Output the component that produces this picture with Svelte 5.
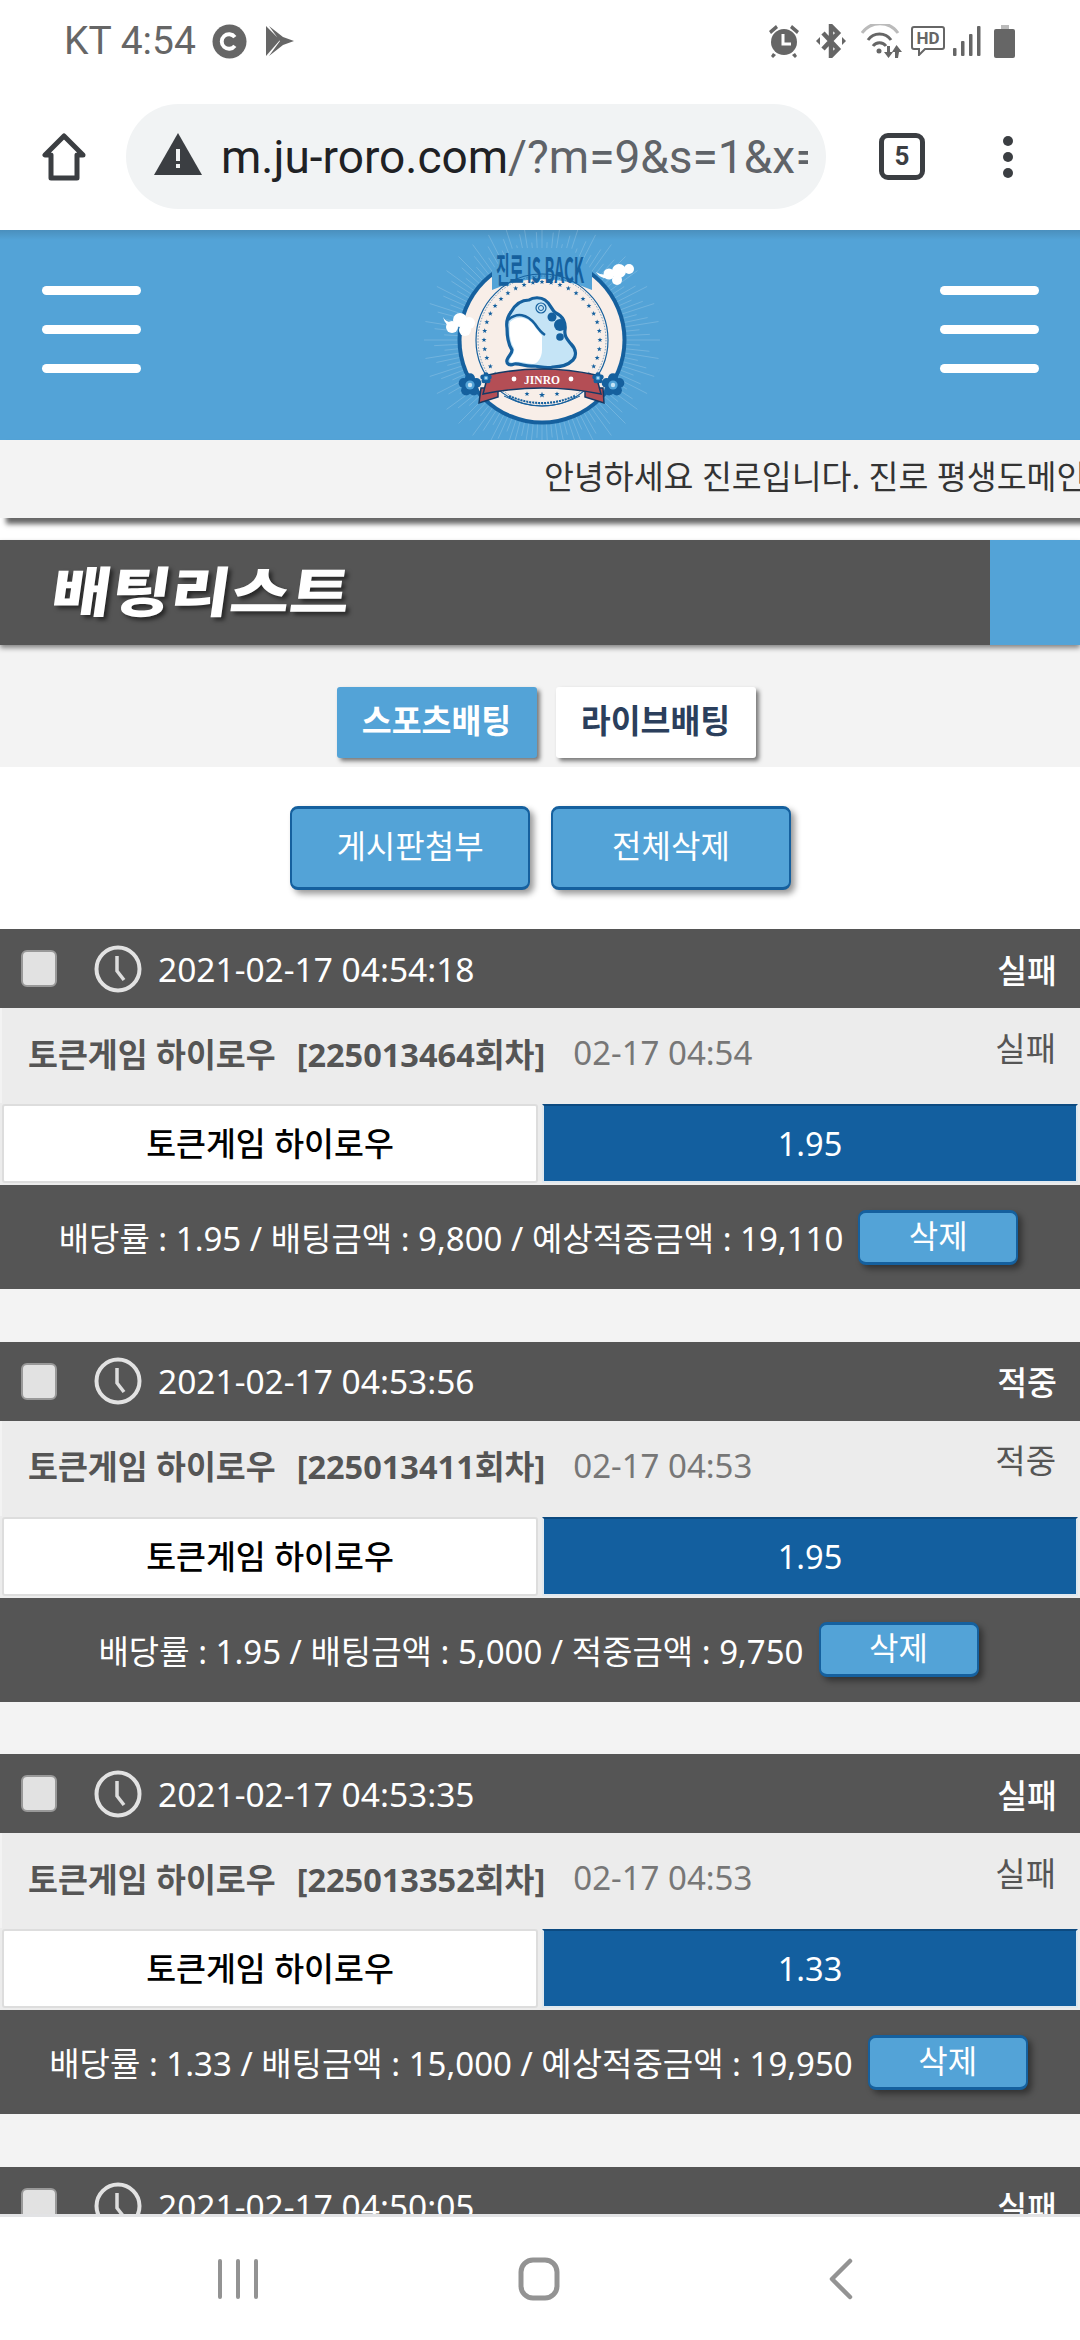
<script>
  const items = [
    { time: '2021-02-17 04:54:18', status: '실패', round: '225013464', short: '02-17 04:54', odd: '1.95', info: '배당률 : 1.95 / 배팅금액 : 9,800 / 예상적중금액 : 19,110' },
    { time: '2021-02-17 04:53:56', status: '적중', round: '225013411', short: '02-17 04:53', odd: '1.95', info: '배당률 : 1.95 / 배팅금액 : 5,000 / 적중금액 : 9,750' },
    { time: '2021-02-17 04:53:35', status: '실패', round: '225013352', short: '02-17 04:53', odd: '1.33', info: '배당률 : 1.33 / 배팅금액 : 15,000 / 예상적중금액 : 19,950' },
    { time: '2021-02-17 04:50:05', status: '실패', round: '225013300', short: '02-17 04:50', odd: '1.95', info: '배당률 : 1.95 / 배팅금액 : 9,800 / 예상적중금액 : 19,110' }
  ];
  const cx = 181, cy = 120;
  const rays = Array.from({ length: 120 }, (_, i) => {
    const a = (i * 3 * Math.PI) / 180;
    const long = i % 3 === 0 ? 118 : i % 3 === 1 ? 98 : 108;
    return {
      x1: cx + Math.cos(a) * 84, y1: cy + Math.sin(a) * 84,
      x2: cx + Math.cos(a) * long, y2: cy + Math.sin(a) * long
    };
  });
  function star(x, y, r) {
    const pts = [];
    for (let i = 0; i < 10; i++) {
      const a = -Math.PI / 2 + (i * Math.PI) / 5;
      const q = i % 2 ? r * 0.42 : r;
      pts.push((x + Math.cos(a) * q).toFixed(2) + ',' + (y + Math.sin(a) * q).toFixed(2));
    }
    return pts.join(' ');
  }
  const stars = Array.from({ length: 31 }, (_, i) => {
    const a = ((-135 + i * 9) * Math.PI) / 180 - Math.PI / 2;
    return star(cx + Math.cos(a) * 58, cy + Math.sin(a) * 58, 2.6);
  });
  const petals = [0, 72, 144, 216, 288];
</script>

<div class="phone">
  <div class="status">
    <div class="status-left">
      <span class="carrier">KT 4:54</span>
      <svg class="ic-c" viewBox="0 0 36 36"><circle cx="18" cy="18" r="17.500" fill="#666"/><path d="M23.500 13.500a7.500 7.500 0 1 0 0 9" fill="none" stroke="#fff" stroke-width="4"/></svg>
      <svg class="ic-play" viewBox="0 0 28 30"><path d="M0 0l14 14L0 30zM3 0l14 11 11 4-11 4-14 11 11-15z" fill="#666"/></svg>
    </div>
    <div class="status-right">
      <svg class="s-alarm" viewBox="0 0 32 34"><g fill="#666"><circle cx="16" cy="18" r="13"/><path d="M1 7l7-6 2 3-7 6zM31 7l-7-6-2 3 7 6zM5 29l3 2-3 3-2-2zM27 29l-3 2 3 3 2-2z"/></g><path d="M15 10v10h8" fill="none" stroke="#fff" stroke-width="3"/></svg>
      <svg class="s-bt" viewBox="0 0 30 34"><path d="M7 9l15 16-7 7V2l7 7L7 25" fill="none" stroke="#666" stroke-width="4.500"/><path d="M0 17l4-4v8zM30 17l-4-4v8z" fill="#666"/></svg>
      <svg class="s-wifi" viewBox="0 0 42 34"><path d="M1 9a22 22 0 0 1 36 0" fill="none" stroke="#bbb" stroke-width="3"/><path d="M7 16a14 14 0 0 1 23 0M12 22a8 8 0 0 1 13 0" fill="none" stroke="#666" stroke-width="3"/><circle cx="18" cy="27" r="2.500" fill="#666"/><path d="M26 22h3v6h3l-4.500 6-4.500-6h3zM37 34h-3v-6h-3l4.500-7 5.500 7h-3z" fill="#666"/></svg>
      <svg class="s-hd" viewBox="0 0 34 30"><path d="M3 1h28a2 2 0 0 1 2 2v18a2 2 0 0 1-2 2H14l-6 6v-6H3a2 2 0 0 1-2-2V3a2 2 0 0 1 2-2z" fill="none" stroke="#666" stroke-width="2"/><text x="17" y="18" class="hd">HD</text></svg>
      <svg class="s-sig" viewBox="0 0 28 32"><rect x="0" y="23" width="3.500" height="8" rx="1" fill="#666"/><rect x="8" y="16" width="3.500" height="15" rx="1" fill="#666"/><rect x="16" y="9" width="3.500" height="22" rx="1" fill="#666"/><rect x="24" y="1" width="3.500" height="30" rx="1" fill="#666"/></svg>
      <svg class="s-bat" viewBox="0 0 22 33"><rect x="7" y="0" width="8" height="5" fill="#bbb"/><rect x="0" y="4" width="21" height="29" rx="2" fill="#666"/></svg>
    </div>
  </div>

  <div class="browser">
    <svg class="home" viewBox="0 0 48 48"><path d="M24 3L5 22h6v23h26V22h6z" fill="none" stroke="#3b3e42" stroke-width="5" stroke-linejoin="round"/></svg>
    <div class="url">
      <svg class="warn" viewBox="0 0 48 42"><path d="M24 0l24 42H0z" fill="#3b3e42"/><rect x="22" y="16" width="4" height="12" fill="#f1f3f4"/><rect x="22" y="31" width="4" height="4" fill="#f1f3f4"/></svg>
      <span class="url-text"><b>m.ju-roro.com</b>/?m=9&amp;s=1&amp;x=</span>
    </div>
    <div class="tabs-count">5</div>
    <div class="dots"><i></i><i></i><i></i></div>
  </div>

  <div class="page">
    <header class="top">
      <div class="burger"><i></i><i></i><i></i></div>
      <svg class="logo" viewBox="0 10 360 210">
        <g stroke="#fff" stroke-width="0.5" opacity="0.35">
          {#each rays as r}<line x1={r.x1} y1={r.y1} x2={r.x2} y2={r.y2} />{/each}
        </g>
        <circle cx="181" cy="120" r="84.500" fill="#15609e"/>
        <circle cx="181" cy="120" r="80.500" fill="#f8eee8"/>
        <path d="M131 50 L131 70 Q181 48 231 70 L231 50 L210 28 L152 28z" fill="#53a3d7"/>
        <circle cx="181" cy="120" r="66" fill="none" stroke="#15609e" stroke-width="1.200"/>
        <circle cx="181" cy="120" r="64" fill="none" stroke="#15609e" stroke-width="0.600" stroke-dasharray="1.500 1.500"/>
        <text x="135" y="63" class="jin" textLength="88" lengthAdjust="spacingAndGlyphs">진로 IS BACK</text>
        {#each stars as s}<polygon points={s} fill="#15609e"/>{/each}

        <path d="M150 92C155 83 162 80 168 80C172 77 180 77 184 80C190 84 190 90 195 93C202 96 205 103 204 110C203 117 207 120 210 124C215 129 216 136 212 140C207 145 200 147 192 147C185 149 178 146 172 146C166 147 158 143 153 144C149 146 145 144 146 140C147 136 151 134 151 130C147 124 146 116 146 108C145 102 147 96 150 92z" fill="#c5e4f6" stroke="#15609e" stroke-width="3.200" stroke-linejoin="round"/>
        <path d="M149 102C156 95 166 97 172 104C176 110 180 114 181 116L181 130C181 138 176 144 172 144C166 144 160 141 154 142C150 143 148 142 149 139C151 135 154 133 153 128C149 122 148 112 149 102z" fill="#fff"/>
        <path d="M147 100C156 92 166 94 174 104C178 110 181 113 184 115" fill="none" stroke="#15609e" stroke-width="2.500"/>
        <circle cx="180" cy="88" r="5" fill="none" stroke="#15609e" stroke-width="1.200"/>
        <circle cx="180" cy="88" r="2.500" fill="none" stroke="#15609e" stroke-width="1"/>
        <circle cx="191" cy="97" r="4.500" fill="#15609e"/>
        <circle cx="199" cy="105" r="6" fill="#15609e"/>
        <circle cx="199" cy="117" r="3.800" fill="#15609e"/>

        <path d="M120 168L118 183L137 177L137 168z" fill="#b44e55" stroke="#143a66" stroke-width="1.500"/>
        <path d="M242 168L243 183L224 177L224 168z" fill="#b44e55" stroke="#143a66" stroke-width="1.500"/>
        <path d="M127 155Q181 143 235 155L240 174Q181 162 122 174z" fill="#b44e55" stroke="#143a66" stroke-width="1.500"/>
        <text x="181" y="164" class="jinro">JINRO</text>
        <circle cx="153" cy="159" r="2.400" fill="#fff"/>
        <circle cx="210" cy="159" r="2.400" fill="#fff"/>
        <polygon points={star(166, 174, 2.6)} fill="#15609e"/>
        <polygon points={star(181, 175, 3.2)} fill="#15609e"/>
        <polygon points={star(196, 174, 2.6)} fill="#15609e"/>
        <path d="M143 176Q181 196 219 176" fill="none" stroke="#15609e" stroke-width="1"/>
        <path d="M148 176Q181 190 214 176" fill="none" stroke="#15609e" stroke-width="2" stroke-dasharray="2 1"/>

        {#each [[109, 165, 11], [252, 165, 11], [125, 158, 5.5], [237, 158, 5.5]] as f}
          <g transform="translate({f[0]} {f[1]})">
            {#each petals as p}
              <circle cx={Math.cos((p - 90) * Math.PI / 180) * f[2] * 0.6} cy={Math.sin((p - 90) * Math.PI / 180) * f[2] * 0.6} r={f[2] * 0.46} fill="#15609e"/>
            {/each}
            <circle r={f[2] * 0.42} fill="#53a3d7"/>
            <circle r={f[2] * 0.2} fill="#c5e4f6"/>
          </g>
        {/each}

        <g fill="#fff">
          <circle cx="258" cy="51" r="7"/><circle cx="248" cy="54" r="5.500"/><circle cx="268" cy="49" r="5"/><circle cx="256" cy="60" r="5"/>
          <path d="M235 52Q243 57 250 52L250 58Q240 60 235 52z"/>
          <circle cx="99" cy="100" r="7"/><circle cx="108" cy="103" r="6"/><circle cx="91" cy="107" r="6"/><circle cx="104" cy="110" r="6"/>
          <path d="M82 97Q85 103 92 102L92 107Q84 106 82 97z"/>
        </g>
      </svg>
      <div class="burger"><i></i><i></i><i></i></div>
    </header>

    <div class="marquee">안녕하세요 진로입니다. 진로 평생도메인 안내드립니다.</div>

    <div class="title"><h1>배팅리스트</h1><span class="accent"></span></div>

    <div class="tabbar">
      <span class="tab on">스포츠배팅</span>
      <span class="tab">라이브배팅</span>
    </div>

    <div class="actions">
      <span class="btn large">게시판첨부</span>
      <span class="btn large">전체삭제</span>
    </div>

    <div class="list">
      {#each items as it}
        <section class="item">
          <div class="head">
            <span class="check"></span>
            <svg class="clock" viewBox="0 0 48 48"><circle cx="24" cy="24" r="21.500" fill="none" stroke="#e2e2e2" stroke-width="4"/><path d="M23 11v15l7 9" fill="none" stroke="#ddd" stroke-width="3.500"/></svg>
            <span class="time">{it.time}</span>
            <span class="state">{it.status}</span>
          </div>
          <div class="game">
            <b>토큰게임 하이로우</b>
            <b class="rnd">[{it.round}회차]</b>
            <span class="short">{it.short}</span>
            <span class="game-state">{it.status}</span>
          </div>
          <div class="cells">
            <div class="cell name">토큰게임 하이로우</div>
            <div class="cell odd">{it.odd}</div>
          </div>
          <div class="foot">
            <span class="info">{it.info}</span>
            <span class="btn small">삭제</span>
          </div>
        </section>
      {/each}
    </div>
  </div>

  <nav class="nav">
    <svg width="40" height="42" viewBox="0 0 40 42"><g fill="#939393"><rect x="0" y="1" width="4" height="40" rx="2"/><rect x="18" y="1" width="4" height="40" rx="2"/><rect x="36" y="1" width="4" height="40" rx="2"/></g></svg>
    <svg width="42" height="44" viewBox="0 0 42 44"><rect x="3" y="3" width="36" height="38" rx="12" fill="none" stroke="#939393" stroke-width="5"/></svg>
    <svg width="26" height="42" viewBox="0 0 26 42"><path d="M22 3L4 21l18 18" fill="none" stroke="#939393" stroke-width="4.500" stroke-linecap="round" stroke-linejoin="round"/></svg>
  </nav>
</div>

<style>
  :global(body) { margin: 0; background: #fff; }
  .phone {
    width: 1080px; height: 2340px; display: flex; flex-direction: column; overflow: hidden; background: #fff;
    font-family: "Noto Sans", "Noto Sans CJK KR", sans-serif; color: #555;
  }
  .status { height: 60px; flex: none; display: flex; align-items: center; justify-content: space-between; padding: 22px 64px 0 64px; box-sizing: border-box; }
  .status-left, .status-right { display: flex; align-items: center; }
  .carrier { font: 39px/38px Roboto, sans-serif; color: #666; margin-right: 16px; }
  .ic-c { width: 35px; height: 35px; margin-right: 19px; }
  .ic-play { width: 28px; height: 30px; }
  .s-alarm { width: 32px; height: 34px; margin-right: 16px; }
  .s-bt { width: 30px; height: 34px; margin-right: 15px; }
  .s-wifi { width: 42px; height: 34px; margin-right: 8px; }
  .s-hd { width: 34px; height: 30px; margin-right: 8px; }
  .s-sig { width: 28px; height: 32px; margin-right: 13px; }
  .s-bat { width: 22px; height: 33px; }
  .hd { font: 700 17px Roboto, sans-serif; fill: #666; text-anchor: middle; }

  .browser { height: 170px; flex: none; display: flex; align-items: center; box-sizing: border-box; padding: 23px 0 0 40px; }
  .home { width: 48px; height: 48px; flex: none; margin-right: 38px; }
  .url { width: 700px; height: 105px; flex: none; box-sizing: border-box; border-radius: 53px; background: #f1f3f4; display: flex; align-items: center; padding-left: 28px; overflow: hidden; }
  .warn { width: 48px; height: 42px; flex: none; margin: 0 19px 6px 0; }
  .url-text { font: 46px Roboto, sans-serif; color: #5f6368; white-space: nowrap; width: 587px; overflow: hidden; }
  .url-text b { font-weight: 400; color: #202124; }
  .tabs-count { width: 46px; height: 47px; flex: none; box-sizing: border-box; margin-left: 53px; border: 5px solid #3b3e42; border-radius: 9px; font: 700 26px/37px Roboto, sans-serif; color: #3b3e42; text-align: center; }
  .dots { display: flex; flex-direction: column; gap: 6px; margin-left: 78px; }
  .dots i { width: 10px; height: 10px; border-radius: 50%; background: #3b3e42; }

  .page { flex: 1; min-height: 0; overflow: hidden; background: #fff; }
  .top {
    height: 210px; box-sizing: border-box; display: flex; align-items: flex-start; justify-content: space-between; padding: 56px 41px 0 42px;
    background: linear-gradient(#4a8fbd 0, #53a3d7 10px);
  }
  .burger { width: 99px; display: flex; flex-direction: column; gap: 30px; }
  .burger i { height: 9px; border-radius: 5px; background: #fff; }
  .logo { width: 360px; height: 210px; margin-top: -56px; flex: none; }
  .jin { font: 700 35px "Noto Sans CJK KR", sans-serif; fill: #15609e; }
  .jinro { font: 700 11.500px "Liberation Serif", serif; fill: #fff; text-anchor: middle; }

  .marquee { height: 78px; box-sizing: border-box; padding-left: 544px; background: #f3f3f3; font-size: 32.500px; line-height: 74px; color: #333; white-space: nowrap; overflow: hidden; box-shadow: 6px 6px 5px #666; position: relative; }

  .title { height: 105px; margin-top: 22px; display: flex; justify-content: space-between; background: #555; box-shadow: 0 3px 5px rgba(0, 0, 0, 0.45); position: relative; }
  .title h1 { margin: 0 0 0 52px; font: 900 54px/97px "Noto Sans CJK KR", sans-serif; color: #fff; transform: skewX(-8deg) scaleX(1.2); transform-origin: left center; text-shadow: 3px 3px 4px rgba(0, 0, 0, 0.55); }
  .accent { width: 90px; background: #53a3d7; }

  .tabbar { height: 122px; box-sizing: border-box; background: #f3f3f3; display: flex; justify-content: center; gap: 19px; padding: 42px 0 0 12px; }
  .tab { width: 200px; height: 71px; border-radius: 3px; background: #fff; color: #2b3f5c; font-size: 32.500px; font-weight: 700; line-height: 68px; text-align: center; box-shadow: 3px 3px 4px #777; }
  .tab.on { background: #53a3d7; color: #fff; }

  .actions { height: 162px; display: flex; justify-content: center; align-items: center; gap: 21px; padding-left: 1px; }
  .btn { box-sizing: border-box; display: block; background: #53a3d7; border: 2px solid #15609e; border-top-width: 3px; border-bottom-width: 3px; border-radius: 8px; color: #fff; text-align: center; box-shadow: 4px 4px 6px rgba(0, 0, 0, 0.4); }
  .large { width: 240px; height: 84px; font-size: 32px; line-height: 74px; }
  .small { width: 160px; height: 55px; font-size: 32px; line-height: 46px; flex: none; }

  .list { background: #f3f3f3; }
  .item { margin-bottom: 52.670px; }
  .head { height: 79px; box-sizing: border-box; display: flex; align-items: center; background: #555; color: #fff; padding: 0 23px 0 21px; font-size: 33.500px; }
  .check { width: 36px; height: 37px; box-sizing: border-box; border: 2px solid #999; border-radius: 6px; background: #e2e2e2; margin-right: 37px; }
  .clock { width: 48px; height: 48px; margin-right: 16px; }
  .state { margin-left: auto; font-weight: 500; font-size: 32.500px; }
  .game { height: 95px; box-sizing: border-box; display: flex; align-items: center; background: #ececec; padding: 0 24px 6px 26px; border-left: 2px solid #f3f3f3; font-size: 32.500px; color: #555; }
  .game b { font-weight: 700; }
  .rnd { margin-left: 21px; }
  .short { margin-left: 28px; color: #777; font-weight: 400; font-size: 33px; }
  .game-state { margin-left: auto; margin-bottom: 12px; color: #555; font-size: 33px; }
  .cells { height: 82px; box-sizing: border-box; display: flex; justify-content: space-between; padding: 1px 2px 2px; background: #ececec; }
  .cell { width: 536px; box-sizing: border-box; text-align: center; font-size: 32.500px; line-height: 75px; }
  .name { background: #fff; border: 2px solid #ddd; border-radius: 3px; color: #000; font-weight: 500; }
  .odd { background: #135f9f; border: 2px solid #e0e8ee; border-top-color: #0c4a80; color: #fff; }
  .foot { height: 104px; display: flex; align-items: center; justify-content: center; gap: 15px; padding-right: 3px; background: #555; color: #fff; font-size: 33px; }

  .nav { height: 126px; flex: none; box-sizing: border-box; border-top: 3px solid #e2e3e5; display: flex; align-items: center; padding: 0 0 0 218px; background: #fff; }
  .nav svg:nth-child(2) { margin-left: 260px; }
  .nav svg:nth-child(3) { margin-left: 268px; }
</style>
